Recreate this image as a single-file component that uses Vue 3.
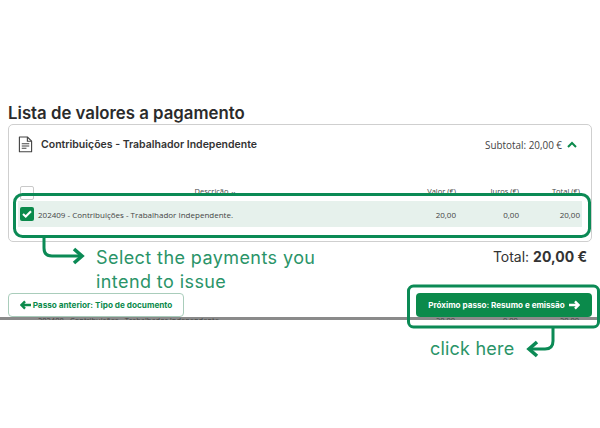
<script setup>
const cols = [
  { label: 'Valor (€)', value: '20,00', w: 63 },
  { label: 'Juros (€)', value: '0,00', w: 63 },
  { label: 'Total (€)', value: '20,00', w: 61 },
]
</script>

<template>
  <div class="page">
    <main class="main">
      <h1 class="title">Lista de valores a pagamento</h1>
      <section class="card">
        <header class="card-head">
          <svg class="doc" viewBox="0 0 16 18" width="15" height="17" fill="none" stroke="#444" stroke-width="1.2">
            <path d="M1.5 1h8.5l4.5 4.5v11.2h-13z" stroke-linejoin="round" />
            <path d="M10 1v4.5h4.5" />
            <path d="M4 8.2h8M4 10.6h8M4 13h5" />
          </svg>
          <span class="card-name">Contribuições - Trabalhador Independente</span>
          <span class="subtotal">Subtotal: 20,00 €</span>
          <svg class="chev" viewBox="0 0 10 7" width="10" height="7" fill="none" stroke="#0b8a4b" stroke-width="2">
            <path d="M1 6l4-4 4 4" />
          </svg>
        </header>
        <div class="thead">
          <span class="box"></span>
          <span class="th-desc">Descrição ⌄</span>
          <span v-for="c in cols" :key="c.label" class="num" :style="{ width: c.w + 'px' }">{{ c.label }}</span>
        </div>
        <div class="row">
          <span class="check">
            <svg viewBox="0 0 12 10" width="10" height="8" fill="none" stroke="#fff" stroke-width="2.6">
              <path d="M1 5l3.4 3.2L11 1.5" />
            </svg>
          </span>
          <span class="row-desc">202409 - Contribuições - Trabalhador Independente.</span>
          <span v-for="c in cols" :key="c.label" class="num" :style="{ width: c.w + 'px' }">{{ c.value }}</span>
        </div>
      </section>
      <div class="total">Total: <b>20,00 €</b></div>
      <nav class="nav">
        <button class="btn back">
          <svg viewBox="0 0 12 10" width="11" height="10" fill="none" stroke="#0b8a4b" stroke-width="2.6">
            <path d="M5.5 1L1.5 5l4 4M2 5h10" />
          </svg>
          Passo anterior: Tipo de documento
        </button>
        <button class="btn next">
          Próximo passo: Resumo e emissão
          <svg viewBox="0 0 12 10" width="11" height="10" fill="none" stroke="#fff" stroke-width="2.6">
            <path d="M6.5 1l4 4-4 4M10 5H0" />
          </svg>
        </button>
      </nav>
      <div class="cut">
        <span class="ghost g1">202408 - Contribuições - Trabalhador Independente.</span>
        <span class="ghost g2">20,00</span>
        <span class="ghost g3">0,00</span>
        <span class="ghost g4">20,00</span>
      </div>
    </main>

    <svg class="overlay" viewBox="0 0 600 428" width="600" height="428" fill="none" stroke="#0b8a55" stroke-width="3">
      <rect x="14.5" y="194.5" width="575" height="42" rx="8" />
      <rect x="408.5" y="286" width="190" height="41" rx="5" />
      <path d="M44 237v11q0 8 8 8h29" />
      <path d="M74 249l8 7-8 7" stroke-width="3.6" />
      <path d="M553 328v13q0 8-8 8h-16" />
      <path d="M537 342l-8 7 8 7" stroke-width="3.6" />
    </svg>
    <p class="note select">Select the payments you<br />intend to issue</p>
    <p class="note click">click here</p>
  </div>
</template>

<style scoped>
.page {
  position: relative;
  width: 600px;
  height: 428px;
  overflow: hidden;
  background: #fff;
  font-family: "Open Sans", sans-serif;
  color: #333;
}
.main {
  padding: 103px 8px 0;
}
.title {
  margin: 0;
  font: 600 16.8px/21px Inter, sans-serif;
  color: #2b2b2b;
}
.card {
  box-sizing: border-box;
  height: 118px;
  border: 1px solid #cfcfcf;
  border-radius: 5px;
  background: #fff;
  padding: 0 9px 0 9px;
}
.card-head {
  display: flex;
  align-items: center;
  height: 39px;
}
.doc {
  margin-right: 8px;
}
.card-name {
  flex: 1;
  font: 600 10.5px/14px Inter, sans-serif;
  color: #333;
}
.subtotal {
  font-size: 9.9px;
  color: #444;
}
.chev {
  margin: 0 5px 0 5px;
}
.thead {
  display: flex;
  align-items: center;
  height: 16px;
  margin-top: 21px;
  padding-right: 2px;
  font-size: 7.5px;
  line-height: 12px;
  color: #444;
}
.thead .th-desc,
.thead .num {
  position: relative;
  top: -2px;
}
.box {
  box-sizing: border-box;
  width: 14px;
  height: 14px;
  margin-left: 2px;
  border: 1px solid #c9c9c9;
  border-radius: 2px;
}
.th-desc {
  flex: 1;
  text-align: center;
  padding-left: 5px;
}
.num {
  text-align: right;
  flex: none;
}
.row {
  display: flex;
  align-items: center;
  height: 26px;
  padding-right: 2px;
  background: #e6f1ec;
  font-size: 8px;
  color: #444;
}
.check {
  display: flex;
  align-items: center;
  justify-content: center;
  width: 14px;
  height: 14px;
  margin-left: 2px;
  border-radius: 2px;
  background: #0b8a4b;
}
.row-desc {
  flex: 1;
  margin-left: 4px;
}
.total {
  height: 30px;
  padding: 7px 5px 0 0;
  box-sizing: border-box;
  text-align: right;
  font: 400 14px/16px Inter, sans-serif;
  color: #333;
}
.total b {
  font-weight: 700;
}
.nav {
  display: flex;
  justify-content: space-between;
  margin-top: 21px;
}
.btn {
  display: flex;
  align-items: center;
  justify-content: center;
  gap: 2px;
  box-sizing: border-box;
  width: 176px;
  height: 24px;
  padding: 0;
  border-radius: 4px;
  font: 700 8.2px/10px Inter, sans-serif;
}
.back {
  border: 1px solid #a9cdbb;
  background: #fff;
  color: #0b8a4b;
}
.next {
  border: 0;
  background: #0b8a4b;
  color: #fff;
  gap: 4px;
  font-size: 8.1px;
}
.cut {
  position: relative;
  height: 3px;
  margin: 0 -8px 0;
  background: #8a8a8a;
  overflow: hidden;
  font-size: 7.5px;
  line-height: 6px;
  color: #444;
}
.ghost {
  position: absolute;
  top: 0;
}
.g1 { left: 38px; }
.g2 { left: 436px; }
.g3 { left: 503px; }
.g4 { left: 560px; }
.overlay {
  position: absolute;
  left: 0;
  top: 0;
  pointer-events: none;
}
.note {
  position: absolute;
  margin: 0;
  font-family: Inter, sans-serif;
  font-weight: 400;
  color: #2a9468;
}
.select {
  left: 96px;
  top: 246px;
  font-size: 18px;
  line-height: 24px;
  letter-spacing: 0.42px;
}
.click {
  left: 430px;
  top: 337px;
  font-size: 18px;
  line-height: 24px;
  letter-spacing: 0.2px;
}
</style>

<style>
html, body { background: #fff; }
</style>
